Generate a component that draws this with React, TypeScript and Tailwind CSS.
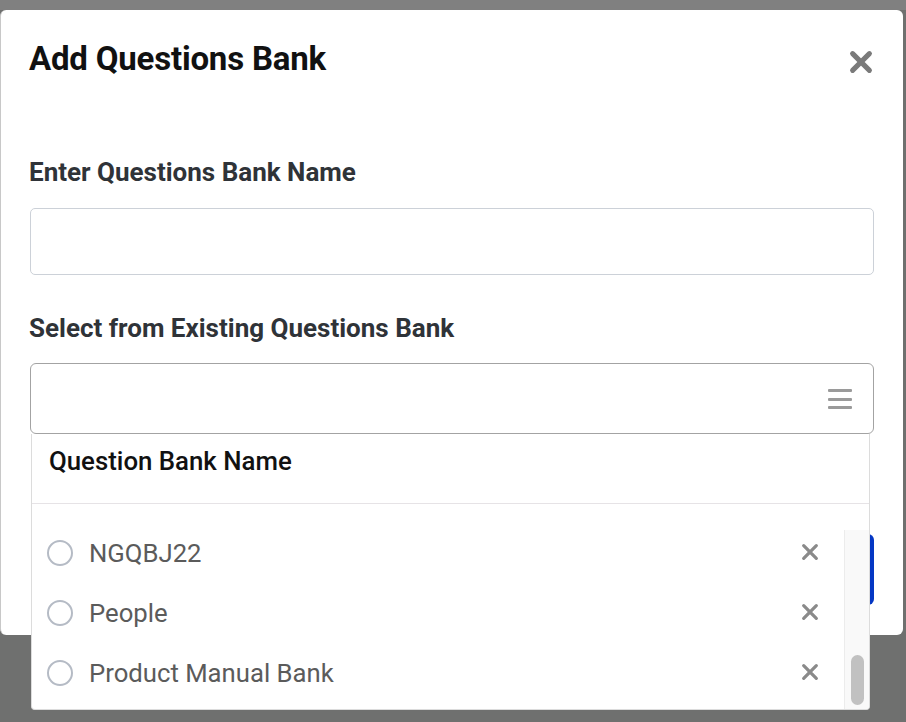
import React from "react";

const font = { fontFamily: "Roboto, 'Liberation Sans', sans-serif" };

function Cross({ size, stroke, color }: { size: number; stroke: number; color: string }) {
  return (
    <svg width={size} height={size} viewBox="0 0 20 20" fill="none">
      <path d="M3 3 L17 17 M17 3 L3 17" stroke={color} strokeWidth={stroke} strokeLinecap="round" />
    </svg>
  );
}

const items = ["NGQBJ22", "People", "Product Manual Bank"];

export default function App() {
  return (
    <div className="w-[906px] h-[722px] overflow-hidden bg-[#6f706f] flex flex-col" style={font}>
      <div className="h-[10px] bg-[#808080] shrink-0" />
      <div className="relative w-[903px] h-[625px] bg-white rounded-[6px] border-l border-[#c8c8c8] px-[28px] pt-[31px] flex flex-col shrink-0">
        <div className="flex items-center justify-between h-[36px]">
          <h1 className="text-[33px] leading-[36px] font-bold text-[#111] tracking-[-0.2px]">Add Questions Bank</h1>
          <div className="mr-[2px] mt-[6px]">
            <Cross size={24} stroke={4.2} color="#7a7a7a" />
          </div>
        </div>

        <label className="mt-[81px] text-[26px] leading-[28px] font-bold text-[#2f3338]">
          Enter Questions Bank Name
        </label>
        <div className="mt-[22px] h-[67px] w-[844px] ml-px border border-[#ccd1d8] rounded-[5px]" />

        <label className="mt-[39px] text-[26px] leading-[28px] font-bold text-[#2f3338]">
          Select from Existing Questions Bank
        </label>
        <div className="mt-[21px] h-[71px] w-[844px] ml-px border border-[#a3a3a3] rounded-[6px] flex items-center justify-end pr-[21px]">
          <div className="flex flex-col gap-[5.5px] mt-[1px]">
            <div className="w-[24px] h-[3px] bg-[#9a9a9a] rounded-[1px]" />
            <div className="w-[24px] h-[3px] bg-[#9a9a9a] rounded-[1px]" />
            <div className="w-[24px] h-[3px] bg-[#9a9a9a] rounded-[1px]" />
          </div>
        </div>

        <div className="mt-[100px] flex justify-end w-[845px]">
          <button className="h-[71px] w-[150px] rounded-[6px] bg-[#0437c4] text-white text-[22px] font-bold">
            Add
          </button>
        </div>

        <div className="absolute left-[30px] top-[424px] w-[839px] h-[276px] bg-white border border-t-0 border-[#dcdcdc] rounded-b-[4px] flex flex-col overflow-hidden">
          <div className="h-[70px] shrink-0 border-b border-[#e6e3e6] pl-[17px] pt-[12px]">
            <span className="text-[25.8px] leading-[30px] font-medium text-[#111]">Question Bank Name</span>
          </div>
          <div className="flex flex-1">
            <div className="flex-1 pt-[19px] flex flex-col">
              {items.map((t) => (
                <div key={t} className="h-[60px] flex items-center pl-[15px] pr-[23px]">
                  <div className="w-[26px] h-[26px] rounded-full border-2 border-[#b5bbc5] shrink-0" />
                  <span className="ml-[16px] text-[25.7px] leading-[30px] text-[#5b5b5b] flex-1">{t}</span>
                  <div className="-mt-[3px] mr-[2px]">
                    <Cross size={18} stroke={3.6} color="#8a8a8a" />
                  </div>
                </div>
              ))}
            </div>
            <div className="w-[25px] mt-[26px] bg-[#f9f9f9] border-l border-[#ececec] flex flex-col justify-end items-center pb-[4px]">
              <div className="w-[13px] h-[50px] rounded-full bg-[#c1c1c1]" />
            </div>
          </div>
        </div>
      </div>
    </div>
  );
}
